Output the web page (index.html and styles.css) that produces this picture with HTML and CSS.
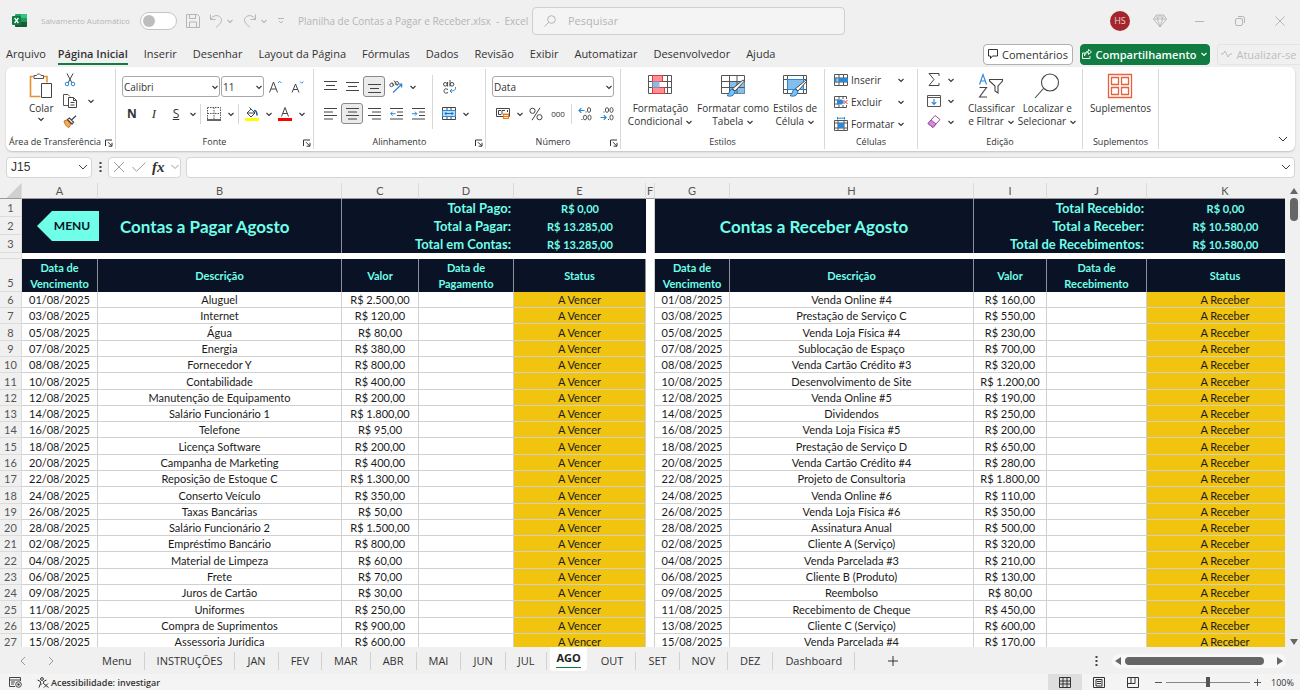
FILE: index.html
```html
<!DOCTYPE html>
<html lang="pt-BR">
<head>
  <meta charset="UTF-8">
  <meta name="viewport" content="width=device-width, initial-scale=1.0">
  <title>Planilha de Contas a Pagar e Receber.xlsx - Excel</title>
  <link rel="stylesheet" href="styles.css">
</head>
<body>
  <svg class="sprite" aria-hidden="true">
    <symbol id="chev" viewBox="0 0 8 8"><path d="M1.5 3 4 5.4 6.5 3" fill="none" stroke="currentColor" stroke-width="1.1"/></symbol>
    <symbol id="launch" viewBox="0 0 8 8"><path d="M.5 7V1H7M3 3.2 6.6 6.8M7 3.8V7.2H3.6" fill="none" stroke="currentColor"/></symbol>
  </svg>

  <header class="titlebar">
    <svg class="logo" width="15" height="16" viewBox="0 0 15 16">
      <rect x="3" y="1" width="12" height="13" rx="1" fill="#21a366"/>
      <rect x="9" y="1" width="6" height="4" fill="#33c481"/>
      <rect x="3" y="8" width="12" height="6" rx="1" fill="#185c37"/>
      <rect x="9" y="5" width="6" height="4" fill="#1f9a5d"/>
      <rect x="0" y="3" width="9" height="9" rx="1" fill="#107c41"/>
      <path d="M2.6 5 6.4 10M6.4 5 2.6 10" stroke="#fff" stroke-width="1.3"/>
    </svg>
    <label class="autosave" for="autosave">Salvamento Automático</label>
    <input type="checkbox" id="autosave" class="toggle">
    <button class="tb" aria-label="Salvar"><svg width="14" height="14" viewBox="0 0 14 14"><path d="M.5.5h11l2 2v11H.5zM3.500.5v4h6v-4M3.500 13.500V8h7v5.500" fill="none" stroke="currentColor"/></svg></button>
    <button class="tb" aria-label="Desfazer"><svg width="14" height="14" viewBox="0 0 14 14"><path d="M1.500.5v5h5M1.500 5.500C4 1 9 .5 11.500 3.500S12 9 7 13.500" fill="none" stroke="currentColor"/></svg><svg class="chev"><use href="#chev"/></svg></button>
    <button class="tb" aria-label="Refazer"><svg width="14" height="14" viewBox="0 0 14 14"><path d="M12.500.5v5h-5M12.500 5.500C10 1 5 .5 2.500 3.500S2 9 7 13.500" fill="none" stroke="currentColor"/></svg><svg class="chev"><use href="#chev"/></svg></button>
    <button class="tb" aria-label="Personalizar"><svg width="8" height="8" viewBox="0 0 8 8"><path d="M1 1.500h6M2 4l2 2 2-2" fill="none" stroke="currentColor"/></svg></button>
    <span class="doc-name">Planilha de Contas a Pagar e Receber.xlsx&nbsp; -&nbsp; Excel</span>
    <div class="search">
      <svg width="12" height="12" viewBox="0 0 12 12"><circle cx="7.500" cy="4.500" r="3.800" fill="none" stroke="currentColor"/><path d="M4.800 7.200.5 11.500" stroke="currentColor"/></svg>
      <input type="text" placeholder="Pesquisar" aria-label="Pesquisar">
    </div>
    <div class="window-buttons">
      <span class="avatar">HS</span>
      <button aria-label="Premium"><svg width="14" height="14" viewBox="0 0 14 14"><path d="M3.500 1h7L13.500 5 7 13 .5 5zM.5 5h13M3.500 1 4.500 5 7 13 9.500 5l1-4M4.500 5 7 1l2.500 4" fill="none" stroke="currentColor" stroke-width=".9"/></svg></button>
      <button aria-label="Minimizar"><svg width="10" height="10" viewBox="0 0 10 10"><path d="M0 5.500h9" stroke="currentColor"/></svg></button>
      <button aria-label="Restaurar"><svg width="10" height="10" viewBox="0 0 10 10"><rect x=".5" y="2.500" width="7" height="7" rx="1.500" fill="none" stroke="currentColor"/><path d="M3 .5h4.500a2 2 0 0 1 2 2V7" fill="none" stroke="currentColor"/></svg></button>
      <button aria-label="Fechar"><svg width="10" height="10" viewBox="0 0 10 10"><path d="m.5.5 9 9M9.500.5l-9 9" stroke="currentColor"/></svg></button>
    </div>
  </header>

  <nav class="menu">
    <a href="#" class="file">Arquivo</a>
    <a href="#" class="active">Página Inicial</a>
    <a href="#">Inserir</a>
    <a href="#">Desenhar</a>
    <a href="#">Layout da Página</a>
    <a href="#">Fórmulas</a>
    <a href="#">Dados</a>
    <a href="#">Revisão</a>
    <a href="#">Exibir</a>
    <a href="#">Automatizar</a>
    <a href="#">Desenvolvedor</a>
    <a href="#">Ajuda</a>
    <div class="menu-actions">
      <button class="comments"><svg width="10" height="10" viewBox="0 0 10 10"><path d="M.5.5h9v6.500h-5L2.500 9.500V7h-2z" fill="none" stroke="currentColor"/></svg>Comentários</button>
      <button class="share"><svg width="10" height="10" viewBox="0 0 10 10"><path d="M3 4H.500v5.500H8V7M2.500 7c.5-2.500 2-3.500 4-3.500V5.500L9.500 3 6.500.5v1.700C4 2.200 2.500 4 2.500 7z" fill="none" stroke="currentColor" stroke-width=".9"/></svg>Compartilhamento<svg class="chev"><use href="#chev"/></svg></button>
      <button class="update" disabled><svg width="11" height="8" viewBox="0 0 11 8"><path d="M0 4h2l2-3 3 6 2-3h2" fill="none" stroke="currentColor"/></svg>Atualizar-se</button>
    </div>
  </nav>

  <section class="ribbon">
    <div class="group g-clip">
      <div class="tools">
        <button class="big">
          <svg width="24" height="26" viewBox="0 0 24 26"><path d="M4.500 3.500H1.500v20h10M15 3.500h3v6" fill="none" stroke="#e8912d" stroke-width="1.600"/><path d="M5 5.500v-3h2.500C8 .5 11.500.5 12 2.500h2.500v3z" fill="#fff" stroke="#555"/><path d="M12.500 10.500h10v14h-10z" fill="#fff" stroke="#444"/></svg>
          <span>Colar</span>
          <svg class="chev"><use href="#chev"/></svg>
        </button>
        <div class="stack">
          <button class="ico" aria-label="Recortar"><svg width="12" height="14" viewBox="0 0 12 14"><path d="M3 .5 8 10M9 .5 4 10" stroke="#444" fill="none"/><circle cx="3" cy="11" r="1.800" fill="none" stroke="#2b88d8"/><circle cx="9" cy="11" r="1.800" fill="none" stroke="#2b88d8"/></svg></button>
          <div class="line"><button class="ico" aria-label="Copiar"><svg width="14" height="14" viewBox="0 0 14 14"><path d="M5 11.500H.5V.5H5L7 2.500" fill="none" stroke="#555"/><path d="M5.500 3.500h5l3 3v7h-8zM10.500 3.500v3h3M7.500 8.500h4M7.500 11h4" fill="none" stroke="#444"/></svg></button><button class="drop" aria-label="Opções"><svg class="chev"><use href="#chev"/></svg></button></div>
          <button class="ico" aria-label="Pincel"><svg width="14" height="13" viewBox="0 0 14 13"><path d="m1 6 3-1 4 4-2 3.500C3.500 12 1.500 9 1 6z" fill="#f5a85b" stroke="#d9731a"/><path d="m4.500 4.500 2-1.500 4 4L9 9zM8.500 5 13 .8" fill="#fff" stroke="#444" stroke-width="1.200"/></svg></button>
        </div>
      </div>
      <div class="caption">Área de Transferência<svg class="launch"><use href="#launch"/></svg></div>
    </div>

    <div class="group g-font">
      <div class="tools rows">
        <div class="line">
          <label class="combo w-font"><select aria-label="Fonte"><option>Calibri</option></select><svg class="chev"><use href="#chev"/></svg></label>
          <label class="combo w-size"><select aria-label="Tamanho"><option>11</option></select><svg class="chev"><use href="#chev"/></svg></label>
          <button class="ico" aria-label="Aumentar fonte"><svg width="13" height="13" viewBox="0 0 13 13"><path d="M.5 12.500 4.500 2l4 10.500M2 9h5" fill="none" stroke="#444"/><path d="m9 3 1.700-1.700L12.400 3" fill="none" stroke="#2b88d8"/></svg></button>
          <button class="ico" aria-label="Diminuir fonte"><svg width="13" height="13" viewBox="0 0 13 13"><path d="M1 12.500 4.500 4 8 12.500M2.300 9.500h4.400" fill="none" stroke="#444"/><path d="m9 1.500 1.700 1.700 1.700-1.700" fill="none" stroke="#2b88d8"/></svg></button>
        </div>
        <div class="line">
          <button class="ico bold">N</button>
          <button class="ico italic">I</button>
          <button class="ico under">S</button>
          <button class="drop" aria-label="Opções"><svg class="chev"><use href="#chev"/></svg></button>
          <i class="sep"></i>
          <button class="ico" aria-label="Bordas"><svg width="14" height="14" viewBox="0 0 14 14"><path d="M.5.5h13v12M.5.5v12M7 .5v12M.5 6.500h13" fill="none" stroke="#555" stroke-dasharray="1.500 1"/><path d="M0 13h14" stroke="#333" stroke-width="1.500"/></svg></button>
          <button class="drop" aria-label="Opções"><svg class="chev"><use href="#chev"/></svg></button>
          <i class="sep"></i>
          <button class="ico" aria-label="Cor de preenchimento"><svg width="14" height="14" viewBox="0 0 14 14"><path d="M2 6 6 2l4 4-4 4zM6 2 4.500.5M2.500 6h7" fill="none" stroke="#444"/><path d="M9 3.500c2 0 3 1 3 5" fill="none" stroke="#1f5fa8" stroke-width="1.600"/><path d="M0 11h14v3H0z" fill="#ff0"/></svg></button>
          <button class="drop" aria-label="Opções"><svg class="chev"><use href="#chev"/></svg></button>
          <button class="ico" aria-label="Cor da fonte"><svg width="14" height="14" viewBox="0 0 14 14"><path d="m3.500 9.500 3.500-9 3.500 9M4.700 6.500h4.600" fill="none" stroke="#444"/><path d="M0 11h14v3H0z" fill="red"/></svg></button>
          <button class="drop" aria-label="Opções"><svg class="chev"><use href="#chev"/></svg></button>
        </div>
      </div>
      <div class="caption">Fonte<svg class="launch"><use href="#launch"/></svg></div>
    </div>

    <div class="group g-align">
      <div class="tools">
        <div class="rows">
          <div class="line">
            <button class="ico" aria-label="Alinhar em cima"><svg width="13" height="13" viewBox="0 0 13 13"><path d="M0 1.500h13M2 5.500h9M0 9.500h13" stroke="#444"/></svg></button>
            <button class="ico" aria-label="Alinhar no meio"><svg width="13" height="13" viewBox="0 0 13 13"><path d="M0 2.500h13M2 6.500h9M0 10.500h13" stroke="#444"/></svg></button>
            <button class="ico pressed" aria-label="Alinhar embaixo"><svg width="13" height="13" viewBox="0 0 13 13"><path d="M0 4.500h13M2 8.500h9M0 12.500h13" stroke="#444"/></svg></button>
            <button class="ico" aria-label="Orientação"><svg width="14" height="14" viewBox="0 0 14 14"><g fill="none" stroke="#444" stroke-width=".9"><circle cx="2.500" cy="5" r="1.700"/><path d="m3 2.300 2 3.500M5 .500l3.500 5"/><circle cx="7.800" cy="3.200" r="1.700"/></g><path d="M4 12.500 12.500 4.500M9.500 4.200h3.200v3.200" fill="none" stroke="#2b88d8" stroke-width="1.200"/></svg></button>
            <button class="drop" aria-label="Opções"><svg class="chev"><use href="#chev"/></svg></button>
          </div>
          <div class="line">
            <button class="ico" aria-label="Alinhar à esquerda"><svg width="13" height="13" viewBox="0 0 13 13"><path d="M0 1.500h13M0 5h9M0 8.500h13M0 12h9" stroke="#444"/></svg></button>
            <button class="ico pressed" aria-label="Centralizar"><svg width="13" height="13" viewBox="0 0 13 13"><path d="M0 1.500h13M2 5h9M0 8.500h13M2 12h9" stroke="#444"/></svg></button>
            <button class="ico" aria-label="Alinhar à direita"><svg width="13" height="13" viewBox="0 0 13 13"><path d="M0 1.500h13M4 5h9M0 8.500h13M4 12h9" stroke="#444"/></svg></button>
            <button class="ico" aria-label="Diminuir recuo"><svg width="13" height="13" viewBox="0 0 13 13"><path d="M0 1.500h13M7 5h6M7 8.500h6M0 12h13" stroke="#444"/><path d="M5.500 6.700H.8m1.800-2-2 2 2 2" fill="none" stroke="#2b88d8"/></svg></button>
            <button class="ico" aria-label="Aumentar recuo"><svg width="13" height="13" viewBox="0 0 13 13"><path d="M0 1.500h13M7 5h6M7 8.500h6M0 12h13" stroke="#444"/><path d="M0 6.700h4.700m-1.800-2 2 2-2 2" fill="none" stroke="#2b88d8"/></svg></button>
          </div>
        </div>
        <i class="sep tall"></i>
        <div class="rows">
          <div class="line">
            <button class="ico" aria-label="Quebrar texto"><svg width="13" height="14" viewBox="0 0 13 14"><g fill="none" stroke="#444"><circle cx="2.300" cy="4.300" r="1.800"/><path d="M4.600 2v4.500M7 0v6.500M5 9.500c-3-1.500-4 0-4 1.500s1 3 4 1.500"/><circle cx="9" cy="4.300" r="1.800"/></g><path d="M12.500 7c.3 3-1 4-5.500 4m2-2-2 2 2 2" fill="none" stroke="#2b88d8"/></svg></button>
          </div>
          <div class="line">
            <button class="ico" aria-label="Mesclar e centralizar"><svg width="14" height="13" viewBox="0 0 14 13"><path d="M.5.500h13v12H.5zM5 .5v3M9 .5v3M5 9.500v3M9 9.500v3" fill="#fff" stroke="#444"/><path d="M.5 3.500h13v6H.5z" fill="#b9dcf7" stroke="#2b88d8"/><path d="M3 6.500h8M4.500 5 3 6.500 4.500 8M9.500 5 11 6.500 9.500 8" fill="none" stroke="#1a6fc0"/></svg></button>
            <button class="drop" aria-label="Opções"><svg class="chev"><use href="#chev"/></svg></button>
          </div>
        </div>
      </div>
      <div class="caption">Alinhamento<svg class="launch"><use href="#launch"/></svg></div>
    </div>

    <div class="group g-num">
      <div class="tools rows">
        <div class="line">
          <label class="combo w-format"><select aria-label="Formato de número"><option>Data</option></select><svg class="chev"><use href="#chev"/></svg></label>
        </div>
        <div class="line">
          <button class="ico" aria-label="Formato de contabilização"><svg width="14" height="13" viewBox="0 0 14 13"><path d="M.5 1.500h13v8H.5z" fill="#fff" stroke="#444"/><path d="M5 3.500H2.500v4H5M6 7.500v-4h3M11.500 3v2" fill="none" stroke="#444"/><path d="M7 6.500h6V12H7z" fill="#ee7c1b"/><path d="M8 8.500h4M8 10.500h4" stroke="#fff" stroke-width=".8"/></svg></button>
          <button class="drop" aria-label="Opções"><svg class="chev"><use href="#chev"/></svg></button>
          <button class="ico" aria-label="Porcentagem"><svg width="14" height="14" viewBox="0 0 14 14"><circle cx="3.500" cy="3.800" r="2.600" fill="none" stroke="#444"/><circle cx="10.500" cy="10.200" r="2.600" fill="none" stroke="#444"/><path d="M11 .8 3 13.200" stroke="#444"/></svg></button>
          <button class="ico zeros">000</button>
          <i class="sep"></i>
          <button class="ico" aria-label="Aumentar casas decimais"><svg width="14" height="14" viewBox="0 0 14 14"><g fill="none" stroke="#444" stroke-width=".9"><ellipse cx="11" cy="3" rx="1.600" ry="2.400"/><ellipse cx="7" cy="10.500" rx="1.600" ry="2.400"/><ellipse cx="11.500" cy="10.500" rx="1.600" ry="2.400"/></g><path d="M7.500 5h1M3.500 12.500h1" stroke="#444"/><path d="M6.500 3.500H1m2.300-2.300L1 3.500l2.300 2.300" fill="none" stroke="#2b88d8" stroke-width="1.200"/></svg></button>
          <button class="ico" aria-label="Diminuir casas decimais"><svg width="14" height="14" viewBox="0 0 14 14"><g fill="none" stroke="#444" stroke-width=".9"><ellipse cx="7" cy="3" rx="1.600" ry="2.400"/><ellipse cx="11.500" cy="3" rx="1.600" ry="2.400"/><ellipse cx="11.500" cy="10.500" rx="1.600" ry="2.400"/></g><path d="M3.500 5h1M8 12.500h1" stroke="#444"/><path d="M.5 10.500H6M3.800 8.200l2.300 2.300-2.300 2.300" fill="none" stroke="#2b88d8" stroke-width="1.200"/></svg></button>
        </div>
      </div>
      <div class="caption">Número<svg class="launch"><use href="#launch"/></svg></div>
    </div>

    <div class="group g-style">
      <div class="tools">
        <button class="big">
          <svg width="26" height="24" viewBox="0 0 26 24"><path d="M1.500 1.500h23v18h-23zM1.500 7.500h23M1.500 13.500h23M5.500 1.500v18M20.500 1.500v18" fill="#fff" stroke="#555"/><path d="M5.500 1.500h10v6h-10zM5.500 13.500h12v6h-12z" fill="#ff8f92" stroke="#e0383e"/><path d="M5.500 7.500h7v6h-7z" fill="#83beec"/></svg>
          <span>Formatação<br>Condicional <svg class="chev"><use href="#chev"/></svg></span>
        </button>
        <button class="big">
          <svg width="26" height="24" viewBox="0 0 26 24"><path d="M1.500 1.500h23v18h-23z" fill="#fff" stroke="#555"/><path d="M9.500 7.500h15v12h-15z" fill="#83beec"/><path d="M1.500 7.500h23M1.500 13.500h23M9.500 1.500v18M17 1.500v18" fill="none" stroke="#555"/><path d="M24.500 7 15 17l-2.500-2.300L23 6z" fill="#fff" stroke="#444"/><path d="M12 15c-3 .5-2 5-5 6.500 3 1.500 7.500.5 8-4z" fill="#83beec" stroke="#1a6fc0"/></svg>
          <span>Formatar como<br>Tabela <svg class="chev"><use href="#chev"/></svg></span>
        </button>
        <button class="big">
          <svg width="26" height="24" viewBox="0 0 26 24"><path d="M1.500 1.500h23v18h-23zM1.500 5.500h23M1.500 15.500h23M5.500 1.500v18M21.500 1.500v18" fill="#fff" stroke="#555"/><path d="M5.500 5.500h16v10h-16z" fill="#83beec" stroke="#2b88d8"/><path d="M25 7 16 17l-2.500-2.300L24 6z" fill="#fff" stroke="#444"/><path d="M13 15c-3 .5-2 5-5 6.500 3 1.500 7.500.5 8-4z" fill="#83beec" stroke="#1a6fc0"/></svg>
          <span>Estilos de<br>Célula <svg class="chev"><use href="#chev"/></svg></span>
        </button>
      </div>
      <div class="caption">Estilos</div>
    </div>

    <div class="group g-cells">
      <div class="tools stack">
        <button class="text-btn"><svg width="14" height="13" viewBox="0 0 14 13"><path d="M.5.500h13v11H.5zM.5 4h13M.5 8h13M5 .5v11M9.500.5v11" fill="none" stroke="#555"/><path d="M5 4h9v4H5z" fill="#2b88d8"/><path d="M6 6H.8m2-2.300L.6 6l2.200 2.300" fill="none" stroke="#2b88d8" stroke-width="1.200"/></svg><span>Inserir</span><svg class="chev"><use href="#chev"/></svg></button>
        <button class="text-btn"><svg width="14" height="13" viewBox="0 0 14 13"><path d="M.5.500h12V3M.5.500v11h12V9M.5 4h5M.5 8h5M5 .5V3M9 .5V3M5 9v2.500M9 9v2.500" fill="none" stroke="#555"/><path d="M3 3.500h5L10 6 8 8.500H3z" fill="#2b88d8"/><path d="m9.500 4 4 4M13.500 4l-4 4" stroke="#e0383e"/></svg><span>Excluir</span><svg class="chev"><use href="#chev"/></svg></button>
        <button class="text-btn"><svg width="14" height="14" viewBox="0 0 14 14"><path d="M.5 3.500h13v10H.5zM.5 6h13M.5 11h13M4 3.500v10M10 3.500v10" fill="none" stroke="#555"/><path d="M4 6h6v5H4z" fill="#2b88d8"/><path d="M3.500 0v2.500M10.500 0v2.500M3.500 1.200h7" stroke="#2b88d8"/></svg><span>Formatar</span><svg class="chev"><use href="#chev"/></svg></button>
      </div>
      <div class="caption">Células</div>
    </div>

    <div class="group g-edit">
      <div class="tools">
        <div class="stack">
          <div class="line"><button class="ico" aria-label="AutoSoma"><svg width="12" height="13" viewBox="0 0 12 13"><path d="M11 3V.500H1L6 6.500l-5 6h10V10" fill="none" stroke="#444"/></svg></button><button class="drop" aria-label="Opções"><svg class="chev"><use href="#chev"/></svg></button></div>
          <div class="line"><button class="ico" aria-label="Preencher"><svg width="14" height="12" viewBox="0 0 14 12"><path d="M.5.500h13v11H.5zM.5 2.500h13" fill="none" stroke="#555"/><path d="M7 4v5.500M4.700 7.200 7 9.500l2.300-2.300" fill="none" stroke="#2b88d8" stroke-width="1.200"/></svg></button><button class="drop" aria-label="Opções"><svg class="chev"><use href="#chev"/></svg></button></div>
          <div class="line"><button class="ico" aria-label="Limpar"><svg width="14" height="13" viewBox="0 0 14 13"><path d="m1 8.500 7-8 5 4-7 8z" fill="#fff" stroke="#a048a8"/><path d="m1 8.500 3-3.500 5 4-3 3.500z" fill="#d08ed6" stroke="#a048a8"/></svg></button><button class="drop" aria-label="Opções"><svg class="chev"><use href="#chev"/></svg></button></div>
        </div>
        <button class="big">
          <svg width="26" height="26" viewBox="0 0 26 26"><path d="m1.500 11.500 3.500-10 3.500 10M2.700 8h4.600" fill="none" stroke="#2b88d8" stroke-width="1.100"/><path d="M1.500 14.500h7L1.500 24h7.500" fill="none" stroke="#444" stroke-width="1.100"/><path d="M11.500 6.500h13V8l-4.500 5v7l-3-2v-5l-5.500-5z" fill="#fff" stroke="#444" stroke-width="1.100"/></svg>
          <span>Classificar<br>e Filtrar <svg class="chev"><use href="#chev"/></svg></span>
        </button>
        <button class="big">
          <svg width="26" height="26" viewBox="0 0 26 26"><circle cx="16" cy="9.500" r="8.500" fill="none" stroke="#444" stroke-width="1.100"/><path d="M9.500 15.500 1 25" stroke="#444" stroke-width="1.100"/></svg>
          <span>Localizar e<br>Selecionar <svg class="chev"><use href="#chev"/></svg></span>
        </button>
      </div>
      <div class="caption">Edição</div>
    </div>

    <div class="group g-addin">
      <div class="tools">
        <button class="big">
          <svg width="26" height="26" viewBox="0 0 26 26"><path d="M1.500 1.500h23v23h-23zM4.500 4.500h7v7h-7zM14.500 4.500h7v7h-7zM4.500 14.500h7v7h-7zM14.500 14.500h7v7h-7z" fill="#fff" stroke="#e8603c" stroke-width="1.300"/></svg>
          <span>Suplementos</span>
        </button>
      </div>
      <div class="caption">Suplementos</div>
    </div>

    <button class="collapse" aria-label="Recolher faixa"><svg width="10" height="6" viewBox="0 0 10 6"><path d="m1 1 4 4 4-4" fill="none" stroke="#333"/></svg></button>
  </section>

  <div class="formula-bar">
    <div class="field name-box">
      <input type="text" value="J15" aria-label="Caixa de nome">
      <svg width="10" height="6" viewBox="0 0 10 6"><path d="m1 1 4 4 4-4" fill="none" stroke="#444"/></svg>
    </div>
    <svg width="3" height="10" viewBox="0 0 3 10"><path d="M.5 0h2v2h-2zM.5 4h2v2h-2zM.5 8h2v2h-2z" fill="#444"/></svg>
    <div class="field fx">
      <button aria-label="Cancelar"><svg width="12" height="12" viewBox="0 0 12 12"><path d="m1 1 10 10M11 1 1 11" stroke="#a0a0a0"/></svg></button>
      <button aria-label="Inserir"><svg width="14" height="10" viewBox="0 0 14 10"><path d="m.5 5 4 4.300L13.500.5" fill="none" stroke="#a0a0a0"/></svg></button>
      <button class="fx-btn">fx</button>
      <svg width="8" height="6" viewBox="0 0 8 6"><path d="m.5 1 3.500 3.500L7.500 1" fill="none" stroke="#999"/></svg>
    </div>
    <div class="field formula">
      <input type="text" aria-label="Barra de fórmulas">
      <svg width="10" height="6" viewBox="0 0 10 6"><path d="m1 1 4 4 4-4" fill="none" stroke="#444"/></svg>
    </div>
  </div>

  <main class="workspace">
    <div class="sheet">
      <table>
        <colgroup>
          <col class="c-num"><col class="c-a"><col class="c-b"><col class="c-c"><col class="c-d"><col class="c-e"><col class="c-f"><col class="c-g"><col class="c-h"><col class="c-i"><col class="c-j"><col class="c-k">
        </colgroup>
        <thead>
          <tr class="letters"><th class="corner"></th><th>A</th><th>B</th><th>C</th><th>D</th><th>E</th><th>F</th><th>G</th><th>H</th><th>I</th><th>J</th><th>K</th></tr>
          <tr class="summary">
            <th class="num">1</th>
            <td colspan="2" rowspan="3" class="dark title-cell">
              <div class="title">
                <a href="#" class="menu-link">MENU</a>
                <h1>Contas a Pagar Agosto</h1>
              </div>
            </td>
            <td colspan="2" class="dark label">Total Pago:</td><td class="dark">R$ 0,00</td>
            <td class="gap"></td>
            <td colspan="2" rowspan="3" class="dark title-cell"><h1>Contas a Receber Agosto</h1></td>
            <td colspan="2" class="dark label">Total Recebido:</td><td class="dark">R$ 0,00</td>
          </tr>
          <tr class="summary">
            <th class="num">2</th>
            <td colspan="2" class="dark label">Total a Pagar:</td><td class="dark">R$ 13.285,00</td>
            <td class="gap"></td>
            <td colspan="2" class="dark label">Total a Receber:</td><td class="dark">R$ 10.580,00</td>
          </tr>
          <tr class="summary">
            <th class="num">3</th>
            <td colspan="2" class="dark label">Total em Contas:</td><td class="dark">R$ 13.285,00</td>
            <td class="gap"></td>
            <td colspan="2" class="dark label">Total de Recebimentos:</td><td class="dark">R$ 10.580,00</td>
          </tr>
          <tr class="thin"><th class="num"></th><td colspan="11"></td></tr>
          <tr class="heads">
            <th class="num">5</th>
            <th class="dark">Data de Vencimento</th><th class="dark">Descrição</th><th class="dark">Valor</th><th class="dark">Data de Pagamento</th><th class="dark">Status</th>
            <td class="gap"></td>
            <th class="dark">Data de Vencimento</th><th class="dark">Descrição</th><th class="dark">Valor</th><th class="dark">Data de Recebimento</th><th class="dark">Status</th>
          </tr>
        </thead>
        <tbody id="rows"></tbody>
      </table>
    </div>
    <div class="vscroll">
      <svg width="8" height="6" viewBox="0 0 8 6"><path d="M4 0 8 6H0z" fill="#666"/></svg>
      <span class="vthumb"></span>
      <svg width="8" height="6" viewBox="0 0 8 6"><path d="M0 0h8L4 6z" fill="#666"/></svg>
    </div>
  </main>

  <nav class="sheet-tabs">
    <div class="arrows">
      <button aria-label="Anterior"><svg width="6" height="10" viewBox="0 0 6 10"><path d="M5 1 1 5l4 4" fill="none" stroke="#999"/></svg></button>
      <button aria-label="Próxima"><svg width="6" height="10" viewBox="0 0 6 10"><path d="m1 1 4 4-4 4" fill="none" stroke="#999"/></svg></button>
    </div>
    <a href="#">Menu</a>
    <a href="#">INSTRUÇÕES</a>
    <a href="#">JAN</a>
    <a href="#">FEV</a>
    <a href="#">MAR</a>
    <a href="#">ABR</a>
    <a href="#">MAI</a>
    <a href="#">JUN</a>
    <a href="#">JUL</a>
    <a href="#" class="current"><span>AGO</span></a>
    <a href="#">OUT</a>
    <a href="#">SET</a>
    <a href="#">NOV</a>
    <a href="#">DEZ</a>
    <a href="#">Dashboard</a>
    <button class="add" aria-label="Nova planilha"><svg width="10" height="10" viewBox="0 0 10 10"><path d="M5 0v10M0 5h10" stroke="#333"/></svg></button>
    <div class="hscroll">
      <svg width="3" height="10" viewBox="0 0 3 10"><path d="M.5 0h2v2h-2zM.5 4h2v2h-2zM.5 8h2v2h-2z" fill="#444"/></svg>
      <div class="htrack">
        <svg width="6" height="8" viewBox="0 0 6 8"><path d="M6 0v8L0 4z" fill="#666"/></svg>
        <span class="hthumb"></span>
        <svg width="6" height="8" viewBox="0 0 6 8"><path d="M0 0v8l6-4z" fill="#666"/></svg>
      </div>
    </div>
  </nav>

  <footer class="status">
    <svg width="13" height="11" viewBox="0 0 13 11"><path d="M6 9.500H.5v-9h11V4M.5 3h11M2 5h4M2 7h3" fill="none" stroke="#444"/><circle cx="9.500" cy="7.500" r="2.800" fill="none" stroke="#444"/><circle cx="9.500" cy="7.500" r="1.200" fill="#444"/></svg>
    <button class="access"><svg width="12" height="11" viewBox="0 0 12 11"><circle cx="5" cy="2" r="1.400" fill="none" stroke="#333"/><path d="M.5 3 3.500 4.500v2L2 10.500M9.500 3 6.500 4.500v2M3.500 8 5 6.500M6.500 6.500l5 4M11 6.500l-4 4" fill="none" stroke="#333"/></svg>Acessibilidade: investigar</button>
    <div class="views">
      <button class="on" aria-label="Normal"><svg width="12" height="11" viewBox="0 0 12 11"><path d="M.5.500h11v10H.5zM.5 4h11M.5 7h11M4 .5v10M8 .5v10" fill="none" stroke="#333"/></svg></button>
      <button aria-label="Layout da Página"><svg width="12" height="11" viewBox="0 0 12 11"><path d="M.5.500h11v10H.5zM3 2.500h6v6.500H3zM4 4.500h4M4 6.500h4" fill="none" stroke="#333"/></svg></button>
      <button aria-label="Quebra de página"><svg width="12" height="11" viewBox="0 0 12 11"><path d="M.5.500h11v10H.5zM4 .5v6M.5 6.500H8M8 .5v6" fill="none" stroke="#333"/></svg></button>
    </div>
    <button class="zoom-btn" aria-label="Reduzir"><svg width="7" height="7" viewBox="0 0 7 7"><path d="M0 3.500h7" stroke="#555"/></svg></button>
    <input type="range" min="0" max="100" value="50" aria-label="Zoom">
    <button class="zoom-btn" aria-label="Ampliar"><svg width="7" height="7" viewBox="0 0 7 7"><path d="M0 3.500h7M3.500 0v7" stroke="#555"/></svg></button>
    <span class="zoom-value">100%</span>
  </footer>

  <script src="script.js"></script>
</body>
</html>
```
FILE: styles.css
```css
* {
  box-sizing: border-box;
}
body {
  margin: 0;
  height: 100vh;
  display: flex;
  flex-direction: column;
  overflow: hidden;
  background: #f0f0f0;
  color: #333;
  font-family: "Open Sans", "Noto Sans", sans-serif;
  font-size: 11px;
}
button, input, select {
  font: inherit;
  color: inherit;
}
button {
  display: flex;
  align-items: center;
  justify-content: center;
  padding: 0;
  border: 0;
  background: none;
}
a {
  color: inherit;
  text-decoration: none;
}
svg {
  flex: none;
}
.sprite {
  display: none;
}
.chev {
  width: 8px;
  height: 8px;
}

/* title bar */
.titlebar {
  display: flex;
  align-items: center;
  flex: none;
  height: 41px;
  padding-left: 12px;
  color: #b5b5b5;
}
.autosave {
  width: 92px;
  margin: 0 7px 0 14px;
  font-size: 8px;
  white-space: nowrap;
}
.toggle {
  appearance: none;
  width: 37px;
  height: 18px;
  margin: 0 9px 0 0;
  padding: 2px;
  border: 1px solid #c4c4c4;
  border-radius: 9px;
  background: #fff;
}
.toggle::before {
  content: "";
  display: block;
  width: 12px;
  height: 12px;
  border-radius: 50%;
  background: #bdbdbd;
}
.tb {
  gap: 3px;
  margin-right: 9px;
}
.doc-name {
  width: 224px;
  margin: 0 10px 0 4px;
  font-size: 10px;
  white-space: nowrap;
}
.search {
  display: flex;
  align-items: center;
  gap: 12px;
  flex: 0 1 313px;
  height: 28px;
  padding: 0 11px;
  border: 1px solid #cfcfcf;
  border-radius: 4px;
  background: #f4f4f4;
}
.search input {
  flex: 1;
  min-width: 0;
  padding: 0;
  border: 0;
  background: none;
  outline: none;
}
.search input::placeholder {
  color: #b5b5b5;
}
.window-buttons {
  display: flex;
  align-items: center;
  margin-left: auto;
}
.window-buttons button {
  width: 40px;
}
.avatar {
  width: 20px;
  height: 20px;
  margin-right: 10px;
  border-radius: 50%;
  background: #a4262c;
  color: #eccfd0;
  font-size: 9px;
  line-height: 20px;
  text-align: center;
}

/* menu */
.menu {
  display: flex;
  align-items: center;
  gap: 16px;
  flex: none;
  height: 26px;
  padding-left: 6px;
  white-space: nowrap;
}
.menu a {
  height: 22px;
  line-height: 22px;
}
.menu .file {
  margin-right: -4px;
}
.menu .active {
  border-bottom: 2px solid #107c41;
  font-weight: 600;
}
.menu-actions {
  display: flex;
  gap: 7px;
  margin-left: auto;
}
.menu-actions button {
  gap: 4px;
  height: 21px;
  border: 1px solid #b0b0b0;
  border-radius: 4px;
}
.menu-actions .comments {
  width: 90px;
  background: #fff;
}
.menu-actions .share {
  width: 130px;
  border-color: #107c41;
  background: #107c41;
  color: #fff;
  font-weight: 600;
}
.menu-actions .update {
  width: 83px;
  border-color: #e4e4e4;
  border-right: 0;
  border-radius: 4px 0 0 4px;
  color: #bdbdbd;
}

/* ribbon */
.ribbon {
  display: flex;
  flex: none;
  height: 84px;
  margin: 0 5px 0 6px;
  border-radius: 6px;
  background: #fff;
  box-shadow: 0 1px 2px rgba(0, 0, 0, 0.2);
}
.group {
  display: flex;
  flex-direction: column;
  justify-content: space-between;
  margin: 2px 0;
  border-right: 1px solid #d8d8d8;
}
.g-clip { width: 110px; }
.g-font { width: 198px; }
.g-align { width: 172px; }
.g-num { width: 135px; }
.g-style { width: 204px; }
.g-cells { width: 93px; }
.g-edit { width: 165px; }
.g-addin { width: 76px; }
.caption {
  display: flex;
  justify-content: center;
  align-items: center;
  position: relative;
  font-size: 9px;
  line-height: 14px;
  white-space: nowrap;
}
.g-clip .caption {
  justify-content: flex-start;
  padding-left: 3px;
}
.launch {
  position: absolute;
  right: 2px;
  top: 4px;
  width: 8px;
  height: 8px;
}
.tools {
  display: flex;
}
.rows {
  display: flex;
  flex-direction: column;
  gap: 6px;
  padding-top: 7px;
}
.stack {
  display: flex;
  flex-direction: column;
}
.line {
  display: flex;
  align-items: center;
}
.ico {
  width: 22px;
  height: 21px;
}
.drop {
  width: 11px;
  height: 21px;
}
.sep {
  width: 1px;
  height: 20px;
  margin: 0 2px;
  background: #d8d8d8;
}
.sep.tall {
  height: 54px;
  margin: 6px 5px 0 3px;
}
.pressed {
  border: 1px solid #8a8a8a;
  border-radius: 3px;
  background: #ebebeb;
}
.bold {
  font-weight: 700;
  font-size: 12px;
}
.italic {
  font-family: "Liberation Serif", serif;
  font-style: italic;
  font-size: 13px;
}
.under {
  text-decoration: underline;
  font-size: 12px;
}
.zeros {
  font-size: 8px;
}
.combo {
  display: flex;
  position: relative;
}
.combo select {
  appearance: none;
  width: 100%;
  height: 21px;
  padding: 0 1px;
  border: 1px solid #a8a8a8;
  border-radius: 3px;
  background: #fff;
  font-size: 10px;
}
.combo .chev {
  position: absolute;
  right: 1px;
  top: 7px;
}
.w-font {
  width: 98px;
  margin-right: 1px;
}
.w-size {
  width: 43px;
}
.w-format {
  width: 122px;
}
.g-font .rows, .g-align .tools {
  padding-left: 5px;
}
.g-num .rows {
  padding-left: 6px;
}
.g-font .combo:first-child {
  margin-left: 1px;
}
.big {
  flex-direction: column;
  justify-content: flex-start;
  line-height: 13px;
  font-size: 10px;
  white-space: nowrap;
}
.big svg:first-child {
  margin: 4px 0 3px;
}
.big span .chev {
  vertical-align: middle;
}
.g-clip .tools {
  padding-left: 23px;
}
.g-clip .stack {
  margin-left: 6px;
}
.g-clip .drop {
  margin-left: 4px;
}
.g-style .big {
  flex: none;
  height: 64px;
}
.g-style .tools {
  justify-content: center;
  gap: 4px;
}
.g-style .big svg:first-child {
  margin: 5px 0 4px;
}
.g-cells .stack {
  padding-left: 9px;
}
.text-btn {
  justify-content: flex-start;
  height: 22px;
  font-size: 10px;
}
.text-btn span {
  width: 46px;
  margin-left: 3px;
  text-align: left;
}
.g-edit .tools {
  padding-left: 5px;
}
.g-edit .big {
  margin-left: 3px;
}
.g-edit .stack + .big {
  margin-left: 12px;
}
.g-addin .tools {
  justify-content: center;
}
.collapse {
  width: 20px;
  height: 20px;
  margin: auto 2px 2px auto;
}

/* formula bar */
.formula-bar {
  display: flex;
  align-items: center;
  flex: none;
  gap: 5px;
  height: 32px;
  padding: 0 5px 0 6px;
}
.field {
  display: flex;
  align-items: center;
  height: 21px;
  padding-right: 3px;
  border: 1px solid #d5d5d5;
  border-radius: 4px;
  background: #fff;
}
.field input {
  flex: 1;
  min-width: 0;
  padding: 0 4px;
  border: 0;
  outline: none;
  background: none;
}
.name-box {
  width: 86px;
  margin-right: 2px;
  font-family: "Liberation Sans", Arial, sans-serif;
  font-size: 12px;
}
.fx {
  justify-content: space-between;
  width: 73px;
  margin-left: 1px;
  padding: 0 1px 0 4px;
}
.fx-btn {
  font-family: "Liberation Serif", serif;
  font-style: italic;
  font-weight: 700;
  font-size: 15px;
}
.formula {
  flex: 1;
}

/* spreadsheet */
.workspace {
  display: flex;
  flex: 1;
  min-height: 0;
}
.sheet {
  flex: 1;
  min-width: 0;
  overflow: hidden;
}
/* last column runs on under the scrollbar */
table {
  width: calc(100% + 19px);
  table-layout: fixed;
  border-collapse: separate;
  border-spacing: 0;
  background: #fff;
  color: #1a1a1a;
  font-family: Lato, Carlito, sans-serif;
  font-size: 11px;
  line-height: 15px;
  text-align: center;
  white-space: nowrap;
}
.c-num { width: 22px; }
.c-a { width: 76px; }
.c-c { width: 77px; }
.c-d { width: 95px; }
.c-e { width: 132px; }
.c-f { width: 9px; }
.c-g { width: 75px; }
.c-i { width: 73px; }
.c-j { width: 100px; }
.c-k { width: 157px; }
td, th {
  padding: 0;
}
td {
  border-right: 1px solid #d0d0d0;
  border-bottom: 1px solid #d0d0d0;
}
.letters th, .num {
  border-right: 1px solid #dcdcdc;
  background: #f0f0f0;
  color: #555;
  font-weight: 400;
  font-size: 11px;
}
.letters th {
  height: 15px;
  border-bottom: 1px solid #999;
}
.letters .corner {
  background: linear-gradient(135deg, #f0f0f0 60%, #d0d0d0 60%);
}
.num {
  border-bottom: 1px solid #dcdcdc;
}
.dark {
  border-right: 1px solid #8d9099;
  border-bottom: 0;
  background: #0a1226;
  color: #6fffe9;
  font-weight: 700;
}
.summary {
  height: 18px;
  line-height: 17px;
}
.summary .dark {
  border-right: 0;
}
.summary .title-cell {
  border-right: 1px solid #8d9099;
}
.summary .label {
  padding-right: 3px;
  font-size: 13px;
  text-align: right;
}
.title {
  display: flex;
  align-items: center;
}
.title-cell h1 {
  margin: 0;
  font-size: 17px;
  font-weight: 700;
}
.menu-link {
  width: 62px;
  margin: 0 21px 0 15px;
  padding-left: 8px;
  background: #6fffe9;
  clip-path: polygon(0 50%, 15px 0, 100% 0, 100% 100%, 15px 100%);
  color: #0a1226;
  font-size: 12px;
  font-weight: 700;
  line-height: 30px;
}
.gap, .thin td {
  border-bottom: 0;
}
.thin, .thin th {
  height: 6px;
  line-height: 0;
}
.thin td {
  border-right: 0;
}
.heads {
  height: 33px;
  line-height: 16px;
}
.heads th {
  white-space: normal;
}
.heads .num {
  padding-top: 16px;
}
tbody tr {
  height: 16px;
}
tbody tr:nth-child(7n + 3), tbody tr:nth-child(7n + 6) {
  height: 17px;
}
.pending {
  background: #f1c40f;
}
.vscroll {
  display: flex;
  flex-direction: column;
  align-items: center;
  gap: 4px;
  width: 15px;
  padding: 5px 0 2px 2px;
}
.vscroll svg:last-child {
  margin-top: auto;
}
.vthumb {
  width: 8px;
  height: 23px;
  border-radius: 4px;
  background: #666;
}

/* sheet tabs */
.sheet-tabs {
  display: flex;
  align-items: center;
  flex: none;
  height: 27px;
  padding-left: 20px;
}
.arrows {
  display: flex;
  gap: 22px;
  width: 70px;
}
.sheet-tabs a {
  height: 18px;
  padding: 0 12px;
  border-right: 1px solid #d0d0d0;
  line-height: 18px;
}
.sheet-tabs .current {
  height: 24px;
  margin: 0 2px 3px 3px;
  padding: 0 6px;
  border-right: 0;
  border-radius: 0 0 4px 4px;
  background: #fff;
  color: #222;
  font-weight: 700;
}
.current span {
  display: block;
  height: 21px;
  border-bottom: 1px solid #107c41;
  line-height: 22px;
}
.add {
  width: 76px;
}
.hscroll {
  display: flex;
  align-items: center;
  gap: 14px;
  margin-left: auto;
  margin-right: 14px;
}
.htrack {
  display: flex;
  align-items: center;
  gap: 4px;
  width: 174px;
  padding: 3px;
  border-radius: 8px;
  background: #f8f8f8;
}
.hthumb {
  flex: 1;
  height: 8px;
  margin-right: 9px;
  border-radius: 4px;
  background: #666;
}

/* status bar */
.status {
  display: flex;
  align-items: center;
  flex: none;
  height: 16px;
  padding: 0 7px 0 9px;
  background: #f4f4f4;
  font-size: 9px;
}
.access {
  gap: 2px;
  margin-left: 15px;
  font-weight: 600;
}
.views {
  display: flex;
  margin-left: auto;
  margin-right: 5px;
}
.views button {
  width: 34px;
  height: 16px;
}
.views .on {
  background: #dedede;
}
.status input {
  appearance: none;
  width: 84px;
  height: 10px;
  margin: 0 4px;
  background: linear-gradient(#888, #888) center / 100% 1px no-repeat;
}
.status input::-webkit-slider-thumb {
  appearance: none;
  width: 4px;
  height: 10px;
  background: #555;
}
.zoom-value {
  width: 22px;
  margin-left: 10px;
}
```
FILE: script.js
```js
const contas = [
  ['01/08/2025', 'Aluguel', '2.500,00', '01/08/2025', 'Venda Online #4', '160,00'],
  ['03/08/2025', 'Internet', '120,00', '03/08/2025', 'Prestação de Serviço C', '550,00'],
  ['05/08/2025', 'Água', '80,00', '05/08/2025', 'Venda Loja Física #4', '230,00'],
  ['07/08/2025', 'Energia', '380,00', '07/08/2025', 'Sublocação de Espaço', '700,00'],
  ['08/08/2025', 'Fornecedor Y', '800,00', '08/08/2025', 'Venda Cartão Crédito #3', '320,00'],
  ['10/08/2025', 'Contabilidade', '400,00', '10/08/2025', 'Desenvolvimento de Site', '1.200,00'],
  ['12/08/2025', 'Manutenção de Equipamento', '200,00', '12/08/2025', 'Venda Online #5', '190,00'],
  ['14/08/2025', 'Salário Funcionário 1', '1.800,00', '14/08/2025', 'Dividendos', '250,00'],
  ['16/08/2025', 'Telefone', '95,00', '16/08/2025', 'Venda Loja Física #5', '200,00'],
  ['18/08/2025', 'Licença Software', '200,00', '18/08/2025', 'Prestação de Serviço D', '650,00'],
  ['20/08/2025', 'Campanha de Marketing', '400,00', '20/08/2025', 'Venda Cartão Crédito #4', '280,00'],
  ['22/08/2025', 'Reposição de Estoque C', '1.300,00', '22/08/2025', 'Projeto de Consultoria', '1.800,00'],
  ['24/08/2025', 'Conserto Veículo', '350,00', '24/08/2025', 'Venda Online #6', '110,00'],
  ['26/08/2025', 'Taxas Bancárias', '50,00', '26/08/2025', 'Venda Loja Física #6', '350,00'],
  ['28/08/2025', 'Salário Funcionário 2', '1.500,00', '28/08/2025', 'Assinatura Anual', '500,00'],
  ['02/08/2025', 'Empréstimo Bancário', '800,00', '02/08/2025', 'Cliente A (Serviço)', '320,00'],
  ['04/08/2025', 'Material de Limpeza', '60,00', '04/08/2025', 'Venda Parcelada #3', '210,00'],
  ['06/08/2025', 'Frete', '70,00', '06/08/2025', 'Cliente B (Produto)', '130,00'],
  ['09/08/2025', 'Juros de Cartão', '30,00', '09/08/2025', 'Reembolso', '80,00'],
  ['11/08/2025', 'Uniformes', '250,00', '11/08/2025', 'Recebimento de Cheque', '450,00'],
  ['13/08/2025', 'Compra de Suprimentos', '900,00', '13/08/2025', 'Cliente C (Serviço)', '600,00'],
  ['15/08/2025', 'Assessoria Jurídica', '600,00', '15/08/2025', 'Venda Parcelada #4', '170,00']
];

document.getElementById('rows').innerHTML = contas.map((c, i) => `
  <tr>
    <th class="num">${i + 6}</th>
    <td>${c[0]}</td><td>${c[1]}</td><td>R$ ${c[2]}</td><td></td><td class="pending">A Vencer</td>
    <td class="gap"></td>
    <td>${c[3]}</td><td>${c[4]}</td><td>R$ ${c[5]}</td><td></td><td class="pending">A Receber</td>
  </tr>`).join('');
```
